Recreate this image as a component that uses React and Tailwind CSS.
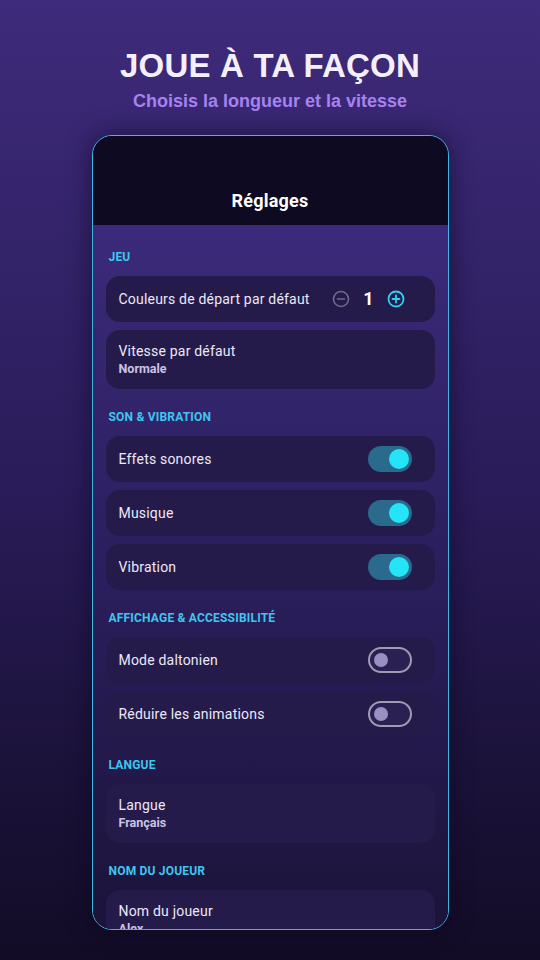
import React from "react";

function Toggle({ on }) {
  if (on) {
    return (
      <div className="w-[44px] h-[26px] rounded-full bg-[#2a6a8c] flex items-center justify-end pr-[3px]">
        <div className="w-[20px] h-[20px] rounded-full bg-[#26e4f7]" />
      </div>
    );
  }
  return (
    <div className="w-[44px] h-[26px] rounded-full bg-[#2a2152] border-2 border-[#a09ab4] flex items-center pl-[4px]">
      <div className="w-[14px] h-[14px] rounded-full bg-[#9a8fc2]" />
    </div>
  );
}

function Label({ children, first }) {
  return (
    <div
      className={`${first ? "pt-[24px]" : "pt-[20px]"} pb-[11px] pl-[3px] text-[12px] leading-[16px] font-bold tracking-[0.2px] text-[#3ec6ef]`}
    >
      {children}
    </div>
  );
}

function Card({ children, tall }) {
  return (
    <div
      className={`${tall ? "h-[59px]" : "h-[46px]"} rounded-[14px] bg-[#251b4b] px-[13px] flex items-center justify-between`}
    >
      {children}
    </div>
  );
}

function Title({ children }) {
  return <span className="text-[14px] tracking-[0.2px] text-[#ece8f6]">{children}</span>;
}

function TwoLine({ title, sub }) {
  return (
    <div className="flex flex-col">
      <span className="text-[14px] leading-[18px] tracking-[0.2px] text-[#ece8f6]">{title}</span>
      <span className="text-[12.5px] leading-[17px] font-bold text-[#cbc3e6]">{sub}</span>
    </div>
  );
}

export default function App() {
  return (
    <div className="w-[540px] h-[960px] overflow-hidden bg-gradient-to-b from-[#3e2b7b] via-[#2a1c5a] to-[#120c26] flex flex-col items-center" style={{ fontFamily: "Roboto, 'Noto Sans', sans-serif" }}>
      <div className="pt-[46px] text-center" style={{ fontFamily: "'Liberation Sans', Arial, sans-serif" }}>
        <div className="text-[33px] leading-[40px] font-bold text-[#f4f0fb] tracking-[0.2px]">JOUE À TA FAÇON</div>
        <div className="mt-[4px] text-[18px] leading-[22px] font-bold text-[#a682f0]">Choisis la longueur et la vitesse</div>
      </div>
      <div className="mt-[23px] w-[357px] h-[795px] rounded-[20px] border-[1.5px] border-[#3db6e0] overflow-hidden flex flex-col shadow-[0_0_24px_rgba(10,5,30,0.6)]">
        <div className="h-[89px] shrink-0 bg-[#0e0a22] flex items-end justify-center pb-[11px]">
          <span className="text-[18px] font-bold text-white tracking-[0.2px]">Réglages</span>
        </div>
        <div className="flex-1 bg-gradient-to-b from-[#3b2a7a] via-[#2a1e5c] to-[#1b1338] px-[13px]">
          <Label first>JEU</Label>
          <div className="flex flex-col gap-[8px]">
            <Card>
              <Title>Couleurs de départ par défaut</Title>
              <div className="flex items-center gap-[13px] pr-[17px]">
                <svg width="18" height="18" viewBox="0 0 18 18" fill="none">
                  <circle cx="9" cy="9" r="7.5" stroke="#6f6a8c" strokeWidth="1.6" />
                  <line x1="5.5" y1="9" x2="12.5" y2="9" stroke="#6f6a8c" strokeWidth="1.6" strokeLinecap="round" />
                </svg>
                <span className="text-[18px] font-bold text-white leading-none">1</span>
                <svg width="18" height="18" viewBox="0 0 18 18" fill="none">
                  <circle cx="9" cy="9" r="7.5" stroke="#2bd3f2" strokeWidth="1.8" />
                  <line x1="5.5" y1="9" x2="12.5" y2="9" stroke="#2bd3f2" strokeWidth="1.8" strokeLinecap="round" />
                  <line x1="9" y1="5.5" x2="9" y2="12.5" stroke="#2bd3f2" strokeWidth="1.8" strokeLinecap="round" />
                </svg>
              </div>
            </Card>
            <Card tall>
              <TwoLine title="Vitesse par défaut" sub="Normale" />
            </Card>
          </div>

          <Label>SON &amp; VIBRATION</Label>
          <div className="flex flex-col gap-[8px]">
            <Card>
              <Title>Effets sonores</Title>
              <div className="pr-[10px]"><Toggle on /></div>
            </Card>
            <Card>
              <Title>Musique</Title>
              <div className="pr-[10px]"><Toggle on /></div>
            </Card>
            <Card>
              <Title>Vibration</Title>
              <div className="pr-[10px]"><Toggle on /></div>
            </Card>
          </div>

          <Label>AFFICHAGE &amp; ACCESSIBILITÉ</Label>
          <div className="flex flex-col gap-[8px]">
            <Card>
              <Title>Mode daltonien</Title>
              <div className="pr-[10px]"><Toggle /></div>
            </Card>
            <Card>
              <Title>Réduire les animations</Title>
              <div className="pr-[10px]"><Toggle /></div>
            </Card>
          </div>

          <Label>LANGUE</Label>
          <Card tall>
            <TwoLine title="Langue" sub="Français" />
          </Card>

          <Label>NOM DU JOUEUR</Label>
          <Card tall>
            <TwoLine title="Nom du joueur" sub="Alex" />
          </Card>
        </div>
      </div>
    </div>
  );
}
